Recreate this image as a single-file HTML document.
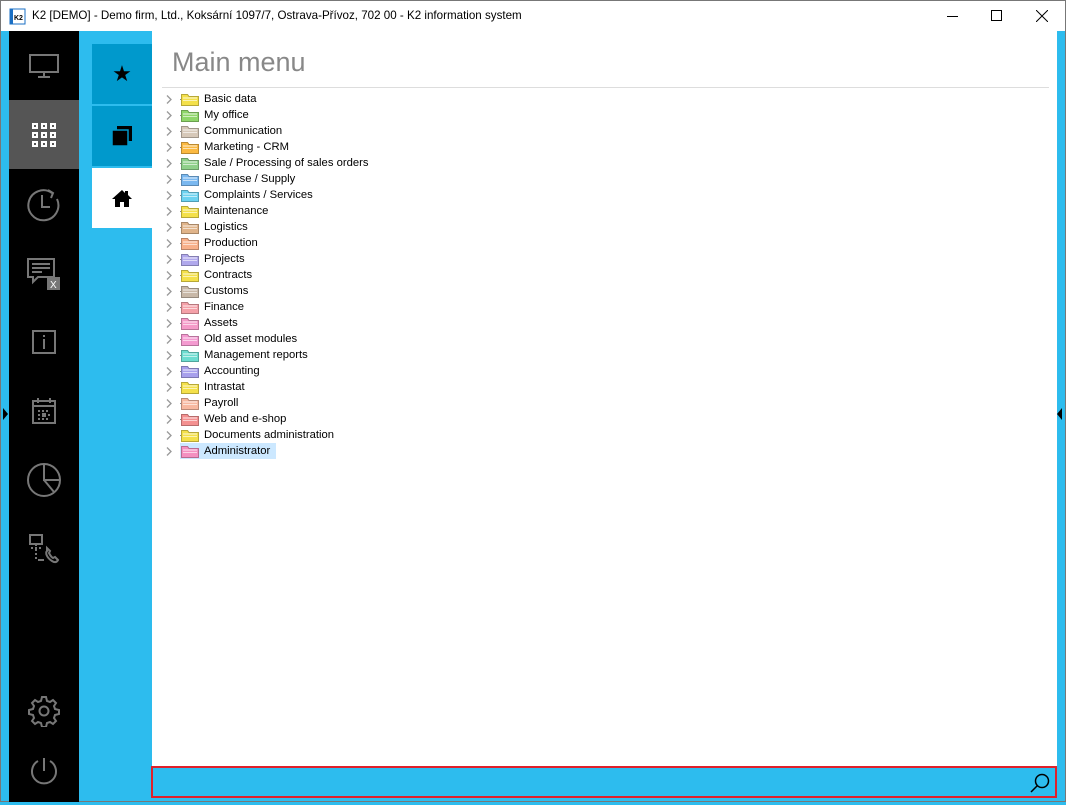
<!DOCTYPE html>
<html><head><meta charset="utf-8"><style>
*{margin:0;padding:0;box-sizing:border-box}
body{width:1066px;height:802px;position:relative;overflow:hidden;background:#2dbcee;font-family:"Liberation Sans","DejaVu Sans",sans-serif}
.abs{position:absolute}
#title{left:0;top:0;width:1066px;height:31px;background:#fff;border:1px solid #777;border-bottom:none}
#title .t{position:absolute;left:31px;top:8px;font-size:11.6px;color:#000}
#side{left:9px;top:31px;width:70px;height:771px;background:#000}
.ic{position:absolute;left:0;width:70px;height:69px;display:flex;align-items:center;justify-content:center}
#content{left:152px;top:31px;width:905px;height:735px;background:#fff}
.tab{position:absolute;left:92px;width:60px;height:60px;background:#0099cc;display:flex;align-items:center;justify-content:center}
h1{position:absolute;left:172px;top:47px;font-size:27px;font-weight:normal;color:#888}
#line{left:162px;top:87px;width:887px;height:1px;background:#ddd}
.row{position:absolute;left:165px;height:16px;font-size:11.25px;line-height:16px;color:#000;white-space:nowrap}
.row .ar{position:absolute;left:0;top:0;width:10px;color:#999}
.row .dt{position:absolute;left:15px;top:8px;width:6px;border-top:1px dotted #888}
.row .fd{position:absolute;left:16px;top:2px}
.row .tx{position:absolute;left:39px;top:0}
#search{left:151px;top:766px;width:906px;height:32px;border:2px solid #e0202a;background:#2dbcee}
</style></head><body>
<div id="title" class="abs">
<svg class="abs" style="left:8px;top:7px" width="17" height="17"><rect x="1" y="1" width="15" height="15" fill="#fff" stroke="#1a6fc4"/><rect x="1" y="1" width="3" height="15" fill="#1a6fc4"/><text x="5" y="12" font-size="7" font-weight="bold" font-family="Liberation Sans">K2</text></svg>
<span class="t">K2 [DEMO] - Demo firm, Ltd., Koksární 1097/7, Ostrava-Přívoz, 702 00 - K2 information system</span>
<div class="abs" style="left:946px;top:15px;width:11px;height:1px;background:#000"></div>
<div class="abs" style="left:990px;top:9px;width:11px;height:11px;border:1px solid #000"></div>
<svg class="abs" style="left:1035px;top:9px" width="12" height="12"><path d="M0 0L12 12M12 0L0 12" stroke="#000"/></svg>
</div>
<div class="abs" style="left:0;top:31px;width:1px;height:771px;background:#777"></div>
<div class="abs" style="left:1065px;top:31px;width:1px;height:771px;background:#777"></div>
<div class="abs" style="left:0;top:801px;width:1066px;height:1px;background:#777"></div>
<div class="abs" style="left:3px;top:408px;width:0;height:0;border-top:6px solid transparent;border-bottom:6px solid transparent;border-left:5px solid #000"></div>
<div class="abs" style="left:1057px;top:408px;width:0;height:0;border-top:6px solid transparent;border-bottom:6px solid transparent;border-right:5px solid #000"></div>

<div id="side" class="abs">
<div class="ic" style="top:0"><svg width="32" height="26" fill="none" stroke="#777" stroke-width="2"><rect x="2" y="2" width="28" height="17"/><path d="M16 19v4M10 24h12"/></svg></div>
<div class="ic" style="top:69px;background:#555"><svg width="24" height="24"><g fill="#fff"><rect x="0" y="0" width="6" height="6"/><rect x="9" y="0" width="6" height="6"/><rect x="18" y="0" width="6" height="6"/><rect x="0" y="9" width="6" height="6"/><rect x="9" y="9" width="6" height="6"/><rect x="18" y="9" width="6" height="6"/><rect x="0" y="18" width="6" height="6"/><rect x="9" y="18" width="6" height="6"/><rect x="18" y="18" width="6" height="6"/></g><g fill="#555"><rect x="2" y="2" width="2" height="2"/><rect x="11" y="2" width="2" height="2"/><rect x="20" y="2" width="2" height="2"/><rect x="2" y="11" width="2" height="2"/><rect x="11" y="11" width="2" height="2"/><rect x="20" y="11" width="2" height="2"/><rect x="2" y="20" width="2" height="2"/><rect x="11" y="20" width="2" height="2"/><rect x="20" y="20" width="2" height="2"/></g></svg></div>
<div class="ic" style="top:138px"><svg width="36" height="36" fill="none" stroke="#777" stroke-width="2"><path d="M26 7A15 15 0 1 0 31 13"/><path d="M22 4l5 3-2 5"/><path d="M16 9v12h8"/></svg></div>
<div class="ic" style="top:207px"><svg width="36" height="36" fill="none" stroke="#777" stroke-width="2"><path d="M2 4h26v18H12l-5 5v-5H2z"/><path d="M6 9h18M6 13h18M6 17h10"/><rect x="21" y="22" width="13" height="13" fill="#777" stroke="none"/><text x="24" y="33" font-size="10" fill="#fff" stroke="none" font-family="Liberation Sans">X</text></svg></div>
<div class="ic" style="top:276px"><svg width="26" height="26" fill="none" stroke="#777" stroke-width="2"><rect x="2" y="2" width="22" height="22"/><path d="M13 10v10M13 6v2"/></svg></div>
<div class="ic" style="top:345px"><svg width="26" height="28" fill="none" stroke="#777" stroke-width="2"><rect x="2" y="4" width="22" height="22"/><path d="M2 9h22M7 1v5M19 1v5"/><g fill="#777" stroke="none"><rect x="7" y="13" width="2" height="2"/><rect x="11" y="13" width="2" height="2"/><rect x="15" y="13" width="2" height="2"/><rect x="7" y="17" width="2" height="2"/><rect x="11" y="16" width="4" height="4"/><rect x="17" y="17" width="2" height="2"/><rect x="7" y="21" width="2" height="2"/><rect x="11" y="21" width="2" height="2"/><rect x="15" y="21" width="2" height="2"/></g></svg></div>
<div class="ic" style="top:414px"><svg width="36" height="36" fill="none" stroke="#777" stroke-width="2"><circle cx="18" cy="18" r="16"/><path d="M18 2v16h16M18 18l10 12"/></svg></div>
<div class="ic" style="top:483px"><svg width="32" height="32" fill="none" stroke="#777" stroke-width="2"><rect x="2" y="2" width="12" height="9"/><path d="M8 11v3M3 15h10M8 16v10" stroke-dasharray="2 2"/><path d="M10 27h6"/><path d="M19 18c-2 2 0 7 5 10 3 2 5 1 6-1l-3-3-2 1c-2-1-3-3-4-5l1-2-3-3z"/></svg></div>
<div class="ic" style="top:645px"><svg width="32" height="32" fill="none" stroke="#777" stroke-width="2"><circle cx="16" cy="16" r="4.5"/><path d="M14 2h4l1 4 3 1 3-2 3 3-2 3 1 3 4 1v4l-4 1-1 3 2 3-3 3-3-2-3 1-1 4h-4l-1-4-3-1-3 2-3-3 2-3-1-3-4-1v-4l4-1 1-3-2-3 3-3 3 2 3-1z"/></svg></div>
<div class="ic" style="top:705px"><svg width="32" height="32" fill="none" stroke="#777" stroke-width="2"><path d="M16 3v13"/><path d="M10 6A12 12 0 1 0 22 6"/></svg></div>
</div>

<div class="tab" style="top:44px"><span style="font-size:22px;color:#000">★</span></div>
<div class="tab" style="top:106px"><svg width="20" height="20"><rect x="5" y="0" width="15" height="15" fill="#000"/><rect x="0" y="4" width="16" height="16" fill="#000" stroke="#0099cc" stroke-width="1.5"/></svg></div>
<div class="tab" style="top:168px;background:#fff"><svg width="20" height="18"><path d="M10 1L0 10h3v8h5v-5h4v5h5v-8h3L16 6V2h-3v2z" fill="#000"/></svg></div>

<div id="content" class="abs"></div>
<h1>Main menu</h1>
<div id="line" class="abs"></div>

<div id="rows"></div>
<div id="search" class="abs"><svg class="abs" style="right:4px;top:4px" width="22" height="22" fill="none" stroke="#000" stroke-width="1.5"><circle cx="13" cy="9" r="6.5"/><path d="M8.5 13.5L2 20"/></svg></div>
<script>
var items=[["Basic data","#f4e04a"],["My office","#8fd66a"],["Communication","#d6c8b8"],["Marketing - CRM","#fbb941"],["Sale / Processing of sales orders","#8fd08a"],["Purchase / Supply","#7ab8f0"],["Complaints / Services","#6cd2f0"],["Maintenance","#f4e04a"],["Logistics","#e0b48a"],["Production","#f8b08a"],["Projects","#b0a8ec"],["Contracts","#f4e04a"],["Customs","#c8b8a8"],["Finance","#f4a0a8"],["Assets","#f49ac8"],["Old asset modules","#f49ad0"],["Management reports","#6cdcd0"],["Accounting","#a8a0ec"],["Intrastat","#f4e04a"],["Payroll","#f8b8a0"],["Web and e-shop","#f49090"],["Documents administration","#f4e04a"],["Administrator","#f490c0"]];
var h="";
items.forEach(function(it,i){
var y=91+i*16;
var sel=i==items.length-1;
h+='<div class="row" style="top:'+y+'px"><span class="ar"><svg width="8" height="16"><path d="M2 4.5L6 8.5 2 12.5" fill="none" stroke="#999" stroke-width="1.3"/></svg></span><span class="dt"></span>'+(sel?'<span class="abs" style="left:15px;top:0;width:96px;height:16px;background:#cce8ff"></span>':'')+'<svg class="fd" width="18" height="13"><path d="M0.5 1.5h6l1.5 2h9.5v9h-17z" fill="'+it[1]+'" stroke="'+it[1]+'"/><rect x="2" y="4.5" width="14" height="1" fill="#fff" opacity=".8"/><rect x="2" y="7" width="14" height="1" fill="#fff" opacity=".6"/><path d="M0.5 1.5h6l1.5 2h9.5v9h-17z" fill="none" stroke="rgba(0,0,0,.25)"/></svg><span class="tx">'+it[0]+'</span></div>';
});
document.getElementById("rows").innerHTML=h;
</script>
</body></html>
